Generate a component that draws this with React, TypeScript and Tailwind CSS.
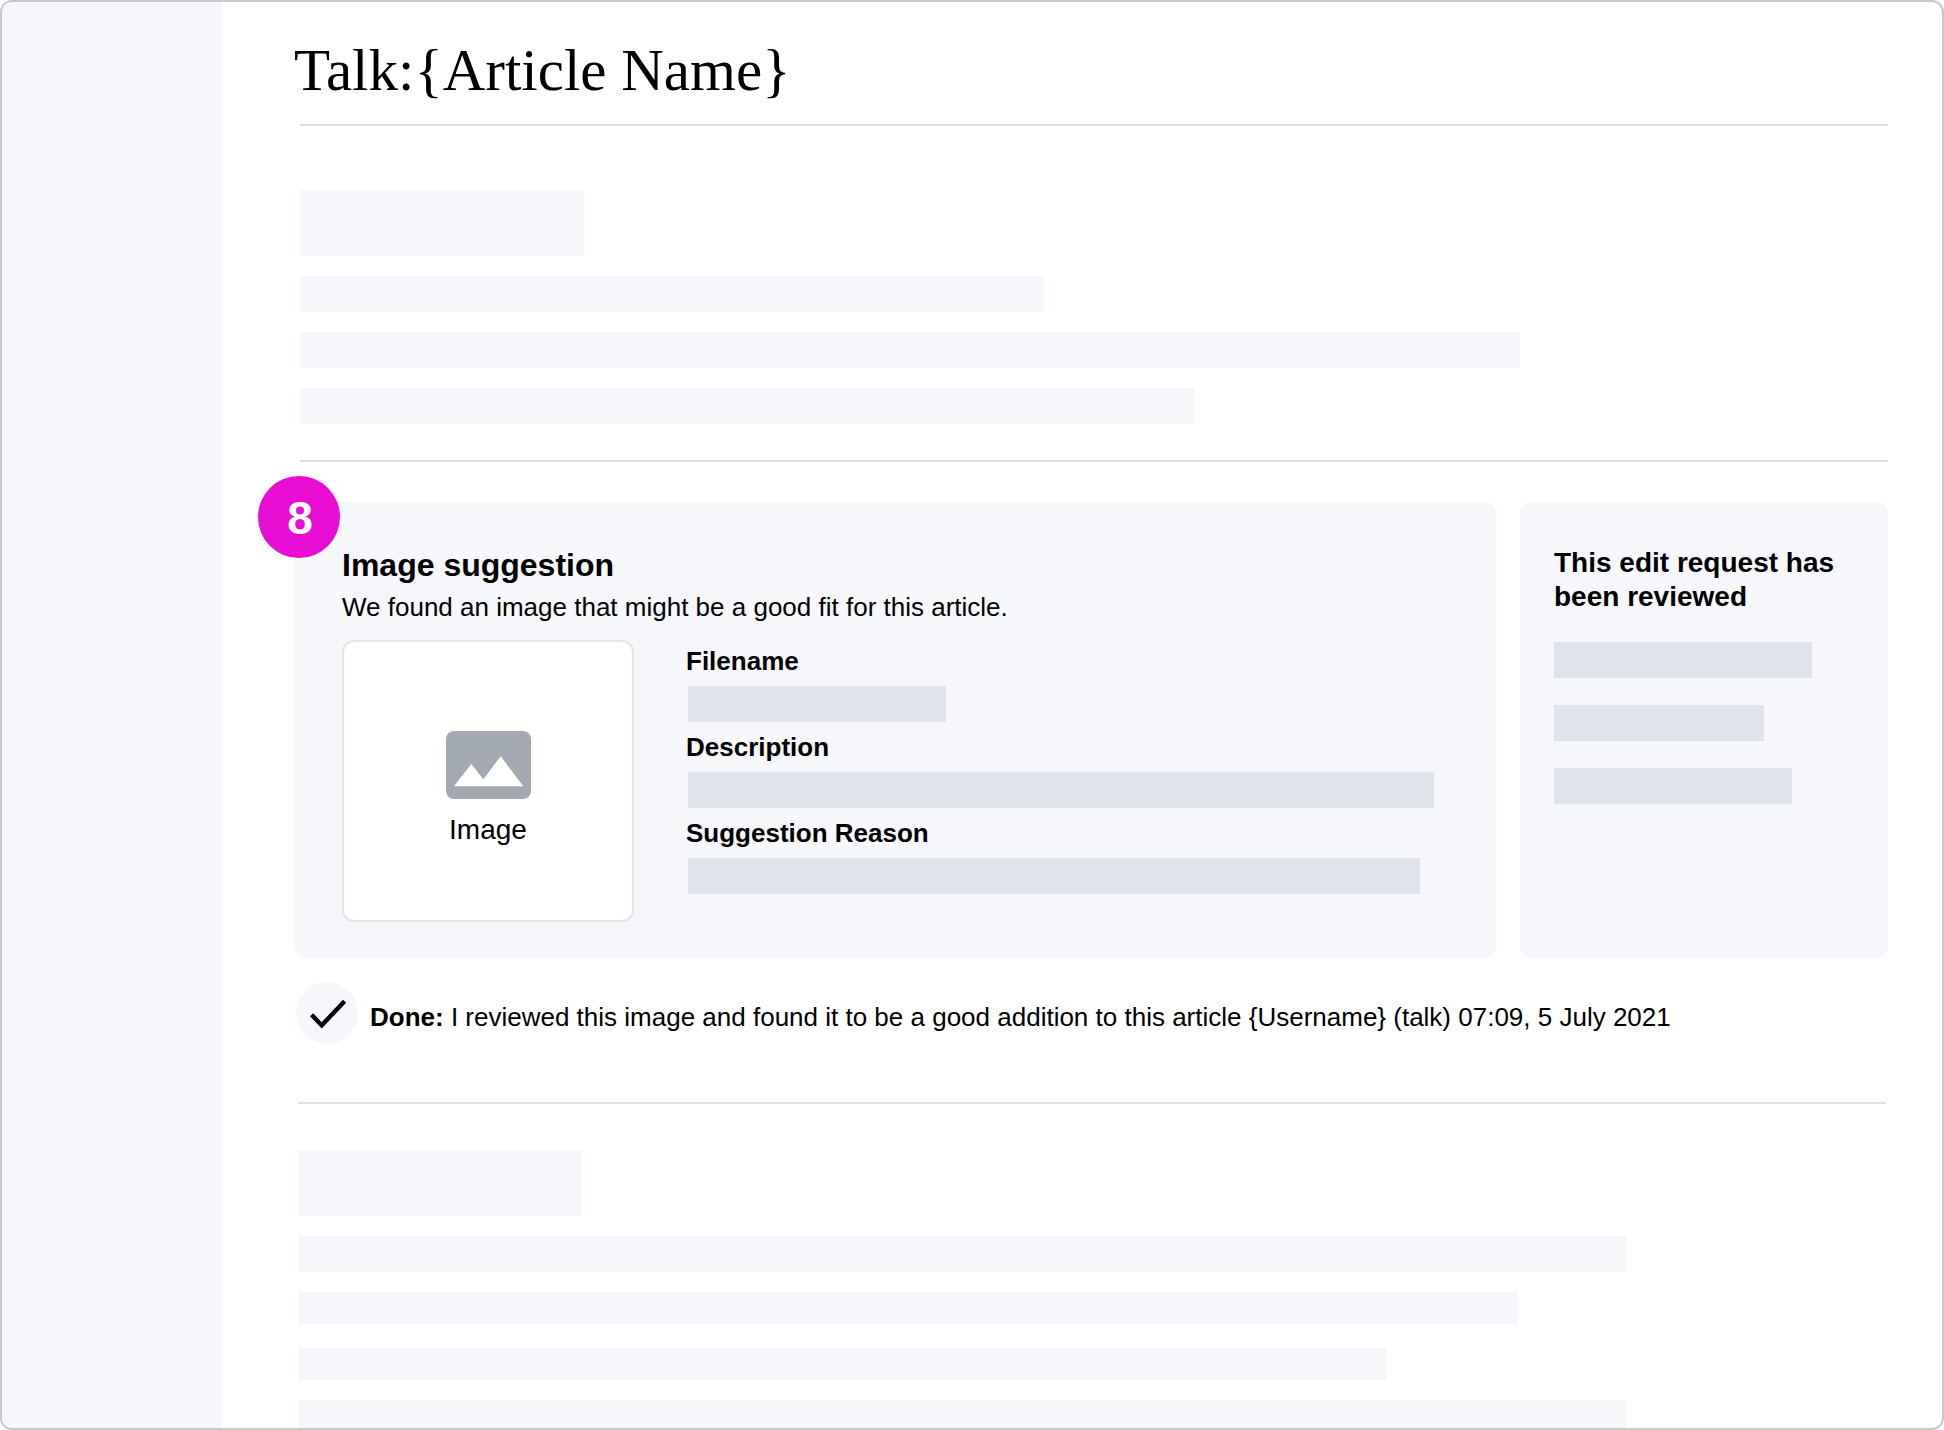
type Block = { width: string; height: string };

const introBlocks: Block[] = [
  { width: "w-[284px]", height: "h-[66px]" },
  { width: "w-[744px]", height: "h-9" },
  { width: "w-[1220px]", height: "h-9" },
  { width: "w-[894px]", height: "h-9" },
];

const details = [
  { label: "Filename", width: "w-[258px]" },
  { label: "Description", width: "w-[746px]" },
  { label: "Suggestion Reason", width: "w-[732px]" },
];

const reviewBlocks = ["w-[258px]", "w-[210px]", "w-[238px]"];

function Placeholder({ width, height }: Block) {
  return <div className={`${width} ${height} max-w-full bg-[#f6f7fb]`} />;
}

function ImageIcon() {
  return (
    <svg width="85" height="68" viewBox="0 0 85 68" aria-hidden="true">
      <rect width="85" height="68" rx="8" fill="#a2a9b1" />
      <path d="M8 55.3 25.3 33l12 15.2L54.7 25.3 77.3 55.3Z" fill="#fff" />
    </svg>
  );
}

function CheckIcon() {
  return (
    <svg width="62" height="62" viewBox="0 0 62 62" fill="none" aria-hidden="true">
      <path d="M15.6 32.8 25.7 43.3 48.6 19.2" stroke="#000" strokeWidth="4.4" />
    </svg>
  );
}

export default function App() {
  return (
    <div className="flex min-h-screen overflow-hidden rounded-[12px] border-2 border-[#c8c8c8] bg-white font-['Liberation_Sans',Arial,sans-serif] text-black">
      <aside className="w-[220px] shrink-0 bg-[#f6f7fb]" />

      <main className="min-w-0 flex-1 pr-[54px] pl-[72px]">
        <h1 className="pt-9 font-['Liberation_Serif',serif] text-[59px] leading-[64px]">
          Talk:&#123;Article Name&#125;
        </h1>

        <section className="mt-[22px] ml-1.5 border-y-2 border-[#dedede] pt-16 pb-9">
          <div className="flex flex-col gap-5">
            {introBlocks.map((block) => (
              <Placeholder key={block.width} {...block} />
            ))}
          </div>
        </section>

        <div className="mt-10 flex gap-6">
          <section className="relative min-w-0 flex-1 rounded-[12px] bg-[#f6f7fb] px-12 pt-10 pb-9">
            <span className="absolute -top-[26px] -left-9 flex size-[82px] items-center justify-center rounded-full bg-[#e80dd3] pt-0.5 pl-0.5 text-[46px] font-bold text-white">
              8
            </span>
            <h2 className="text-[32px] leading-[46px] font-bold">Image suggestion</h2>
            <p className="text-[26px] leading-[38px]">
              We found an image that might be a good fit for this article.
            </p>
            <div className="mt-3.5 flex gap-[52px]">
              <figure className="flex h-[282px] w-[292px] shrink-0 flex-col items-center justify-center gap-3 rounded-[12px] border-2 border-[#e5e5e5] bg-white pt-[18px]">
                <ImageIcon />
                <figcaption className="text-[28px] leading-[38px]">Image</figcaption>
              </figure>
              <dl className="min-w-0 flex-1 pt-1.5">
                {details.map(({ label, width }) => (
                  <div key={label} className="mb-2.5">
                    <dt className="text-[26px] leading-[30px] font-bold">{label}</dt>
                    <dd className={`${width} mt-2.5 ml-0.5 h-9 max-w-full bg-[#e0e3ec]`} />
                  </div>
                ))}
              </dl>
            </div>
          </section>

          <aside className="w-[368px] shrink-0 rounded-[12px] bg-[#f6f7fb] px-[34px] pt-11">
            <h2 className="text-[28px] leading-[34px] font-bold">
              This edit request has been reviewed
            </h2>
            <div className="mt-7 flex flex-col gap-[27px]">
              {reviewBlocks.map((width) => (
                <div key={width} className={`${width} h-9 max-w-full bg-[#e0e3ec]`} />
              ))}
            </div>
          </aside>
        </div>

        <div className="mt-6 ml-0.5 flex items-center gap-3">
          <span className="size-[62px] shrink-0 rounded-full bg-[#f6f7fb]">
            <CheckIcon />
          </span>
          <p className="pt-2 text-[26px] leading-9">
            <strong>Done:</strong> I reviewed this image and found it to be a good addition to
            this article &#123;Username&#125; (talk) 07:09, 5 July 2021
          </p>
        </div>

        <section className="mt-[58px] mr-0.5 ml-1 border-t-2 border-[#dedede] pt-[46px]">
          <div className="flex flex-col gap-5">
            <Placeholder width="w-[284px]" height="h-[66px]" />
            <Placeholder width="w-[1328px]" height="h-9" />
            <Placeholder width="w-[1220px]" height="h-8" />
          </div>
          <div className="mt-6 flex flex-col gap-5">
            <Placeholder width="w-[1088px]" height="h-8" />
            <Placeholder width="w-[1328px]" height="h-7" />
          </div>
        </section>
      </main>
    </div>
  );
}
